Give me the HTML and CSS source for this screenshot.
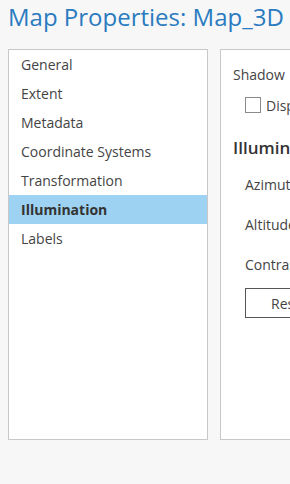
FILE: index.html
```html
<!DOCTYPE html>
<html lang="en">
<head>
    <meta charset="utf-8"/>
    <title>Map Properties: Map_3D</title>
    <link rel="stylesheet" href="styles.css">
</head>
<body>
<div class="dialog">
    <h1 class="dialog-title">Map Properties: Map_3D</h1>
    <div class="dialog-body">
        <ul class="pageList">
            <li>General</li>
            <li>Extent</li>
            <li>Metadata</li>
            <li>Coordinate Systems</li>
            <li>Transformation</li>
            <li class="active">Illumination</li>
            <li>Labels</li>
        </ul>
        <div class="pagePane">
            <div class="label shadowLabel">Shadow</div>
            <label class="checkRow">
                <span class="checkBox"></span>
                <span>Display shadows</span>
            </label>
            <h2 class="sectionTitle">Illumination</h2>
            <div class="label field">Azimuth</div>
            <div class="label field">Altitude</div>
            <div class="label field">Contrast</div>
            <button class="resetBtn">Reset</button>
        </div>
    </div>
</div>
</body>
</html>
```

FILE: styles.css
```css
* {
    margin: 0;
    padding: 0;
    box-sizing: border-box;
}

html, body {
    height: 100%;
}

body {
    background: #f7f7f7;
    font-family: "Open Sans", "Noto Sans", sans-serif;
    font-size: 14px;
    color: #444;
    overflow: hidden;
}

.dialog-title {
    padding: 1px 0 0 8px;
    font-size: 24px;
    font-weight: normal;
    line-height: 32px;
    color: #2a7bc0;
    white-space: nowrap;
}

.dialog-body {
    display: flex;
    gap: 12px;
    margin-top: 16px;
    padding-left: 8px;
}

.pageList {
    flex: 0 0 200px;
    height: 391px;
    background: #fff;
    border: 1px solid #c8c8c8;
    list-style: none;
}

.pageList li {
    height: 29px;
    line-height: 29px;
    padding-left: 12px;
    white-space: nowrap;
}

.pageList li.active {
    background: #9ed2f2;
    font-weight: bold;
    color: #333;
}

.pagePane {
    flex: 0 0 300px;
    height: 391px;
    background: #fff;
    border: 1px solid #c8c8c8;
    padding: 0 0 0 12px;
    display: flex;
    flex-direction: column;
    align-items: flex-start;
    white-space: nowrap;
}

.label {
    line-height: 20px;
}

.shadowLabel {
    margin-top: 15px;
}

.checkRow {
    display: flex;
    align-items: flex-start;
    margin: 11px 0 0 12px;
    line-height: 20px;
}

.checkBox {
    width: 16px;
    height: 16px;
    margin: 1px 5px 0 0;
    border: 1px solid #8a8a8a;
    background: #fff;
}

.sectionTitle {
    margin-top: 20px;
    font-size: 17px;
    font-weight: 600;
    line-height: 24px;
    color: #333;
}

.field {
    margin-left: 12px;
}

.field:nth-of-type(2) {
    margin-top: 15px;
}

.field + .field {
    margin-top: 20px;
}

.resetBtn {
    margin: 13px 0 0 12px;
    height: 30px;
    padding: 0 25px;
    background: #fff;
    border: 1px solid #555;
    font: inherit;
    color: #444;
}
```
